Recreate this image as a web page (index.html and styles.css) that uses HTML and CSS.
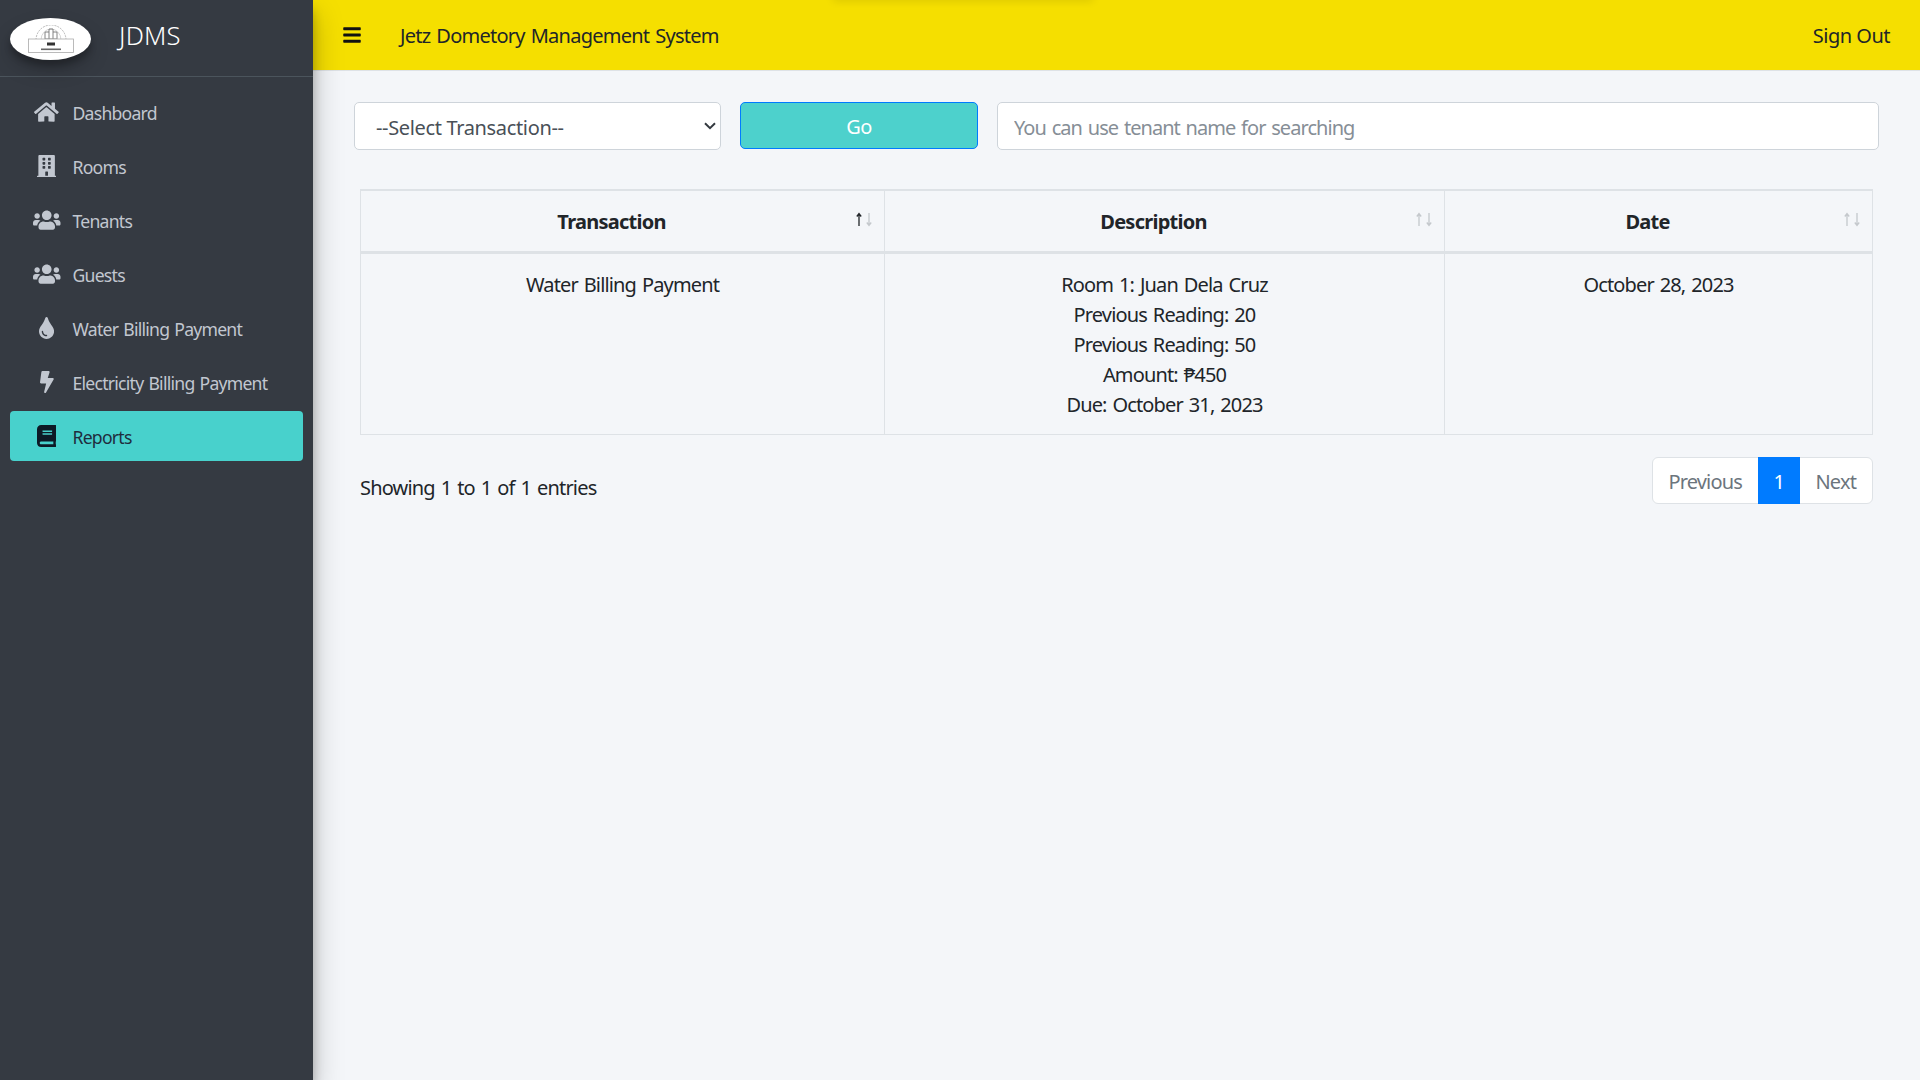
FILE: index.html
```html
<!DOCTYPE html>
<html lang="en">
<head>
<meta charset="utf-8">
<title>JDMS</title>
<link rel="stylesheet" href="styles.css">
</head>
<body>
<div class="app">
  <aside class="sidebar">
    <div class="brand">
      <div class="logo">
        <svg class="logo-art" viewBox="0 0 46 28" width="46" height="28">
          <path d="M8 15A15 15 0 0 1 38 15" fill="none" stroke="#999" stroke-width=".7" stroke-dasharray="2 1"/>
          <path d="M13 15A10 11 0 0 1 33 15" fill="none" stroke="#bbb" stroke-width=".6"/>
          <path d="M17 14V7h4V4h4v3h4v7zM21 7v7M25 7v7" fill="none" stroke="#777" stroke-width=".9"/>
          <rect x=".5" y="14" width="45" height="13.5" fill="#fff" stroke="#aaa" stroke-width=".8"/>
          <rect x="19" y="17.5" width="8" height="3" fill="#333"/>
          <rect x="13" y="23.5" width="20" height="1.6" fill="#666"/>
        </svg>
      </div>
      <span class="brand-name">JDMS</span>
    </div>
    <nav class="nav">
      <a class="nav-item"><span class="nav-icon"><svg viewBox="0 0 576 512" class="i-home"><path d="M280.37 148.26L96 300.11V464a16 16 0 0 0 16 16l112.06-.29a16 16 0 0 0 15.92-16V368a16 16 0 0 1 16-16h64a16 16 0 0 1 16 16v95.64a16 16 0 0 0 16 16.05L464 480a16 16 0 0 0 16-16V300L295.67 148.26a12.19 12.19 0 0 0-15.3 0zM571.6 251.47L488 182.56V44.05a12 12 0 0 0-12-12h-56a12 12 0 0 0-12 12v72.61L318.47 43a48 48 0 0 0-61 0L4.34 251.47a12 12 0 0 0-1.6 16.9l25.5 31A12 12 0 0 0 45.15 301l235.22-193.74a12.19 12.19 0 0 1 15.3 0L530.9 301a12 12 0 0 0 16.9-1.6l25.5-31a12 12 0 0 0-1.7-16.93z"/></svg></span>Dashboard</a>
      <a class="nav-item"><span class="nav-icon"><svg viewBox="0 0 448 512" class="i-narrow"><path d="M436 480h-20V24c0-13.255-10.745-24-24-24H56C42.745 0 32 10.745 32 24v456H12c-6.627 0-12 5.373-12 12v20h448v-20c0-6.627-5.373-12-12-12zM128 76c0-6.627 5.373-12 12-12h40c6.627 0 12 5.373 12 12v40c0 6.627-5.373 12-12 12h-40c-6.627 0-12-5.373-12-12V76zm0 96c0-6.627 5.373-12 12-12h40c6.627 0 12 5.373 12 12v40c0 6.627-5.373 12-12 12h-40c-6.627 0-12-5.373-12-12v-40zm52 148h-40c-6.627 0-12-5.373-12-12v-40c0-6.627 5.373-12 12-12h40c6.627 0 12 5.373 12 12v40c0 6.627-5.373 12-12 12zm76 160h-64v-84c0-6.627 5.373-12 12-12h40c6.627 0 12 5.373 12 12v84zm64-172c0 6.627-5.373 12-12 12h-40c-6.627 0-12-5.373-12-12v-40c0-6.627 5.373-12 12-12h40c6.627 0 12 5.373 12 12v40zm0-96c0 6.627-5.373 12-12 12h-40c-6.627 0-12-5.373-12-12v-40c0-6.627 5.373-12 12-12h40c6.627 0 12 5.373 12 12v40zm0-96c0 6.627-5.373 12-12 12h-40c-6.627 0-12-5.373-12-12V76c0-6.627 5.373-12 12-12h40c6.627 0 12 5.373 12 12v40z"/></svg></span>Rooms</a>
      <a class="nav-item"><span class="nav-icon"><svg viewBox="0 0 640 512" class="i-users"><path d="M96 224c35.3 0 64-28.7 64-64s-28.7-64-64-64-64 28.7-64 64 28.7 64 64 64zm448 0c35.3 0 64-28.7 64-64s-28.7-64-64-64-64 28.7-64 64 28.7 64 64 64zm32 32h-64c-17.6 0-33.5 7.1-45.1 18.6 40.3 22.1 68.9 62 75.1 109.4h66c17.7 0 32-14.3 32-32v-32c0-35.3-28.7-64-64-64zm-256 0c61.9 0 112-50.1 112-112S381.9 32 320 32 208 82.1 208 144s50.1 112 112 112zm76.8 32h-8.3c-20.8 10-43.9 16-68.5 16s-47.6-6-68.5-16h-8.3C179.6 288 128 339.6 128 403.2V432c0 26.5 21.5 48 48 48h288c26.5 0 48-21.5 48-48v-28.8c0-63.6-51.6-115.2-115.2-115.2zm-223.7-13.4C161.5 263.1 145.6 256 128 256H64c-35.3 0-64 28.7-64 64v32c0 17.7 14.3 32 32 32h65.9c6.3-47.4 34.9-87.3 75.2-109.4z"/></svg></span>Tenants</a>
      <a class="nav-item"><span class="nav-icon"><svg viewBox="0 0 640 512" class="i-users"><path d="M96 224c35.3 0 64-28.7 64-64s-28.7-64-64-64-64 28.7-64 64 28.7 64 64 64zm448 0c35.3 0 64-28.7 64-64s-28.7-64-64-64-64 28.7-64 64 28.7 64 64 64zm32 32h-64c-17.6 0-33.5 7.1-45.1 18.6 40.3 22.1 68.9 62 75.1 109.4h66c17.7 0 32-14.3 32-32v-32c0-35.3-28.7-64-64-64zm-256 0c61.9 0 112-50.1 112-112S381.9 32 320 32 208 82.1 208 144s50.1 112 112 112zm76.8 32h-8.3c-20.8 10-43.9 16-68.5 16s-47.6-6-68.5-16h-8.3C179.6 288 128 339.6 128 403.2V432c0 26.5 21.5 48 48 48h288c26.5 0 48-21.5 48-48v-28.8c0-63.6-51.6-115.2-115.2-115.2zm-223.7-13.4C161.5 263.1 145.6 256 128 256H64c-35.3 0-64 28.7-64 64v32c0 17.7 14.3 32 32 32h65.9c6.3-47.4 34.9-87.3 75.2-109.4z"/></svg></span>Guests</a>
      <a class="nav-item"><span class="nav-icon"><svg viewBox="0 0 352 512" class="i-tint"><path d="M205.22 22.09c-7.94-28.78-49.44-30.08-58.44 0C100.01 179.85 0 222.72 0 333.91 0 432.35 78.72 512 176 512s176-79.65 176-178.09c0-111.75-99.79-153.34-146.78-311.82zM176 448c-61.75 0-112-50.25-112-112 0-8.84 7.16-16 16-16s16 7.16 16 16c0 44.11 35.89 80 80 80 8.84 0 16 7.16 16 16s-7.16 16-16 16z"/></svg></span>Water Billing Payment</a>
      <a class="nav-item"><span class="nav-icon"><svg viewBox="0 0 320 512" class="i-bolt"><path d="M296 160H180.6l42.6-129.8C227.2 15 215.7 0 200 0H56C44 0 33.8 8.9 32.2 20.8l-32 240C-1.7 275.2 9.5 288 24 288h118.7L96.6 482.5c-3.6 15.2 8 29.5 23.3 29.5 8.4 0 16.4-4.4 20.8-12l176-304c9.3-15.9-2.2-36-20.7-36z"/></svg></span>Electricity Billing Payment</a>
      <a class="nav-item active"><span class="nav-icon"><svg viewBox="0 0 448 512" class="i-narrow"><path d="M448 360V24c0-13.3-10.7-24-24-24H96C43 0 0 43 0 96v320c0 53 43 96 96 96h328c13.3 0 24-10.7 24-24v-16c0-7.5-3.5-14.3-8.9-18.7-4.2-15.4-4.2-59.3 0-74.7 5.4-4.3 8.9-11.1 8.9-18.6zM128 134c0-3.3 2.7-6 6-6h212c3.3 0 6 2.7 6 6v20c0 3.3-2.7 6-6 6H134c-3.3 0-6-2.7-6-6v-20zm0 64c0-3.3 2.7-6 6-6h212c3.3 0 6 2.7 6 6v20c0 3.3-2.7 6-6 6H134c-3.3 0-6-2.7-6-6v-20zm253.4 250H96c-17.7 0-32-14.3-32-32 0-17.6 14.4-32 32-32h285.4c-1.9 17.1-1.9 46.9 0 64z"/></svg></span>Reports</a>
    </nav>
  </aside>
  <div class="main">
    <header class="topbar">
      <svg viewBox="0 0 448 512" class="menu-icon"><path d="M16 132h416c8.837 0 16-7.163 16-16V76c0-8.837-7.163-16-16-16H16C7.163 60 0 67.163 0 76v40c0 8.837 7.163 16 16 16zm0 160h416c8.837 0 16-7.163 16-16v-40c0-8.837-7.163-16-16-16H16c-8.837 0-16 7.163-16 16v40c0 8.837 7.163 16 16 16zm0 160h416c8.837 0 16-7.163 16-16v-40c0-8.837-7.163-16-16-16H16c-8.837 0-16 7.163-16 16v40c0 8.837 7.163 16 16 16z"/></svg>
      <span class="system-title">Jetz Dometory Management System</span>
      <a class="signout">Sign Out</a>
    </header>
    <main class="content">
      <div class="filters">
        <select class="control select"><option>--Select Transaction--</option></select>
        <button class="go">Go</button>
        <input class="control search" type="text" placeholder="You can use tenant name for searching">
      </div>
      <div class="table-wrap">
        <table class="table">
          <colgroup><col class="col-a"><col class="col-b"><col class="col-c"></colgroup>
          <thead>
            <tr>
              <th>Transaction<span class="sort up"><svg viewBox="0 0 17 15" width="17" height="15"><path class="a1" d="M3 14V2M.8 4.5 3 1.5l2.2 3"/><path class="a2" d="M13 1v12M10.8 10.5l2.2 3 2.2-3"/></svg></span></th>
              <th>Description<span class="sort"><svg viewBox="0 0 17 15" width="17" height="15"><path class="a2" d="M3 14V2M.8 4.5 3 1.5l2.2 3"/><path class="a2" d="M13 1v12M10.8 10.5l2.2 3 2.2-3"/></svg></span></th>
              <th>Date<span class="sort"><svg viewBox="0 0 17 15" width="17" height="15"><path class="a2" d="M3 14V2M.8 4.5 3 1.5l2.2 3"/><path class="a2" d="M13 1v12M10.8 10.5l2.2 3 2.2-3"/></svg></span></th>
            </tr>
          </thead>
          <tbody>
            <tr>
              <td>Water Billing Payment</td>
              <td>Room 1: Juan Dela Cruz<br>Previous Reading: 20<br>Previous Reading: 50<br>Amount: ₱450<br>Due: October 31, 2023</td>
              <td>October 28, 2023</td>
            </tr>
          </tbody>
        </table>
        <div class="table-foot">
          <div class="info">Showing 1 to 1 of 1 entries</div>
          <div class="pagination">
            <a class="page">Previous</a>
            <a class="page current">1</a>
            <a class="page">Next</a>
          </div>
        </div>
      </div>
    </main>
  </div>
</div>
</body>
</html>
```

FILE: styles.css
```css
* { box-sizing: border-box; }
html, body { margin: 0; height: 100%; }
body {
  font-family: "Noto Sans", "Open Sans", sans-serif;
  color: #212529;
  background: #f4f6f9;
  overflow: hidden;
}
.app { display: flex; height: 1080px; }

.sidebar {
  width: 313px;
  flex: none;
  background: #353a42;
  box-shadow: 0 14px 28px rgba(0,0,0,.25), 0 10px 10px rgba(0,0,0,.22);
  position: relative;
  z-index: 2;
}
.brand {
  height: 77px;
  border-bottom: 1px solid #4b545c;
  display: flex;
  align-items: center;
  padding: 0 0 6px 10px;
}
.logo {
  width: 81px;
  height: 42px;
  margin-top: 7px;
  border-radius: 50%;
  background: #fff;
  box-shadow: 0 10px 20px rgba(0,0,0,.19), 0 6px 6px rgba(0,0,0,.23);
  display: flex;
  align-items: center;
  justify-content: center;
  flex: none;
}
.logo-art { filter: blur(.45px); }
.brand-name {
  margin-left: 28px;
  font-size: 25.6px;
  font-weight: 300;
  letter-spacing: .2px;
  color: #fff;
}
.nav {
  padding: 10px 10px 0;
  display: flex;
  flex-direction: column;
  gap: 4px;
}
.nav-item {
  height: 50px;
  display: flex;
  align-items: center;
  padding: 2px 0 0 23px;
  border-radius: 4px;
  font-size: 17.6px;
  letter-spacing: -.75px;
  word-spacing: 1.2px;
  color: #c2c7d0;
}
.nav-icon {
  width: 27.5px;
  height: 24px;
  margin-right: 12px;
  display: flex;
  align-items: center;
  justify-content: center;
  flex: none;
  margin-top: -2px;
}
.nav-icon svg { display: block; height: 22px; fill: #c2c7d0; }
.i-home { width: 24.75px; }
.i-narrow { width: 19.25px; }
.i-users { width: 27.5px; }
.i-tint { width: 15.1px; }
.i-bolt { width: 13.75px; }
.nav-item.active { background: #48d1cc; color: #1f2d3d; }
.nav-item.active svg { fill: #0d1a26; }

.main { flex: 1; min-width: 0; display: flex; flex-direction: column; }
.topbar {
  height: 71px;
  flex: none;
  background: #f5df00;
  border-bottom: 1px solid #dee2e6;
  display: flex;
  align-items: center;
  padding: 0 30px;
  position: relative;
  overflow: hidden;
}
.topbar::before {
  content: "";
  position: absolute;
  top: -4px;
  left: 520px;
  width: 260px;
  height: 4px;
  box-shadow: 0 0 8px rgba(0,0,0,.18);
}
.menu-icon { width: 18px; height: 20px; fill: #111; flex: none; margin-right: 39px; margin-top: -1px; }
.system-title { font-size: 20px; letter-spacing: -.75px; word-spacing: 1.5px; color: #212529; }
.signout { margin-left: auto; font-size: 20px; letter-spacing: -.5px; color: #212529; }

.content { padding: 31px 41px 0; }
.filters {
  display: grid;
  grid-template-columns: 367px 238px 1fr;
  column-gap: 19px;
  align-items: start;
}
.control {
  height: 48px;
  border: 1px solid #ced4da;
  border-radius: 5px;
  background-color: #fff;
  font-family: inherit;
  font-size: 20px;
  color: #495057;
  width: 100%;
  padding: 2px 16px 0;
  outline: none;
}
.search { letter-spacing: -.95px; word-spacing: 1.5px; }
.control::placeholder { color: #868e96; opacity: 1; }
.select {
  appearance: none;
  letter-spacing: -.35px;
  padding-left: 21px;
  background-image: url("data:image/svg+xml,%3Csvg xmlns='http://www.w3.org/2000/svg' viewBox='0 0 12 8'%3E%3Cpath d='M1 1.2l5 5 5-5' fill='none' stroke='%23343a40' stroke-width='2'/%3E%3C/svg%3E");
  background-repeat: no-repeat;
  background-size: 12px 8px;
  background-position: right 4px center;
}
.go {
  height: 47px;
  border: 1px solid #007bff;
  border-radius: 5px;
  background: #4dd1cc;
  color: #fff;
  font-family: inherit;
  font-size: 20px;
  letter-spacing: -.5px;
  padding: 1px 0 0;
}
.table-wrap { margin: 39px 6px 0; }
.table {
  width: 100%;
  table-layout: fixed;
  border-collapse: collapse;
  font-size: 20px;
  line-height: 30px;
  letter-spacing: -.85px;
  word-spacing: 1.5px;
}
.col-a { width: 524px; }
.col-b { width: 560px; }
.table th, .table td {
  border: 1px solid #dee2e6;
  text-align: center;
  vertical-align: top;
  padding: 16px 12px 14px;
  font-weight: 400;
}
.table th {
  font-weight: 700;
  padding-right: 34px;
  letter-spacing: -.75px;
  position: relative;
  border-top-width: 2px;
  border-bottom-width: 3px;
}
.sort { position: absolute; right: 11px; top: 21px; width: 17px; height: 15px; }
.sort svg { display: block; }
.sort path { fill: none; stroke-width: 1.3; }
.a1 { stroke: #212529; }
.a2 { stroke: #c4c8cc; }
.table-foot {
  display: flex;
  justify-content: space-between;
  align-items: flex-start;
  margin-top: 22px;
}
.info { font-size: 20px; line-height: 30px; letter-spacing: -.82px; word-spacing: 1.5px; padding-top: 16px; }
.pagination {
  display: flex;
  height: 47px;
  background: #fff;
  border: 1px solid #dee2e6;
  border-radius: 6px;
}
.page {
  display: flex;
  align-items: center;
  padding: 2px 16px 0;
  font-size: 20px;
  letter-spacing: -.85px;
  color: #6c757d;
}
.page.current { background: #007bff; color: #fff; margin: -1px 0; padding: 2px 15.5px 0; }
```
